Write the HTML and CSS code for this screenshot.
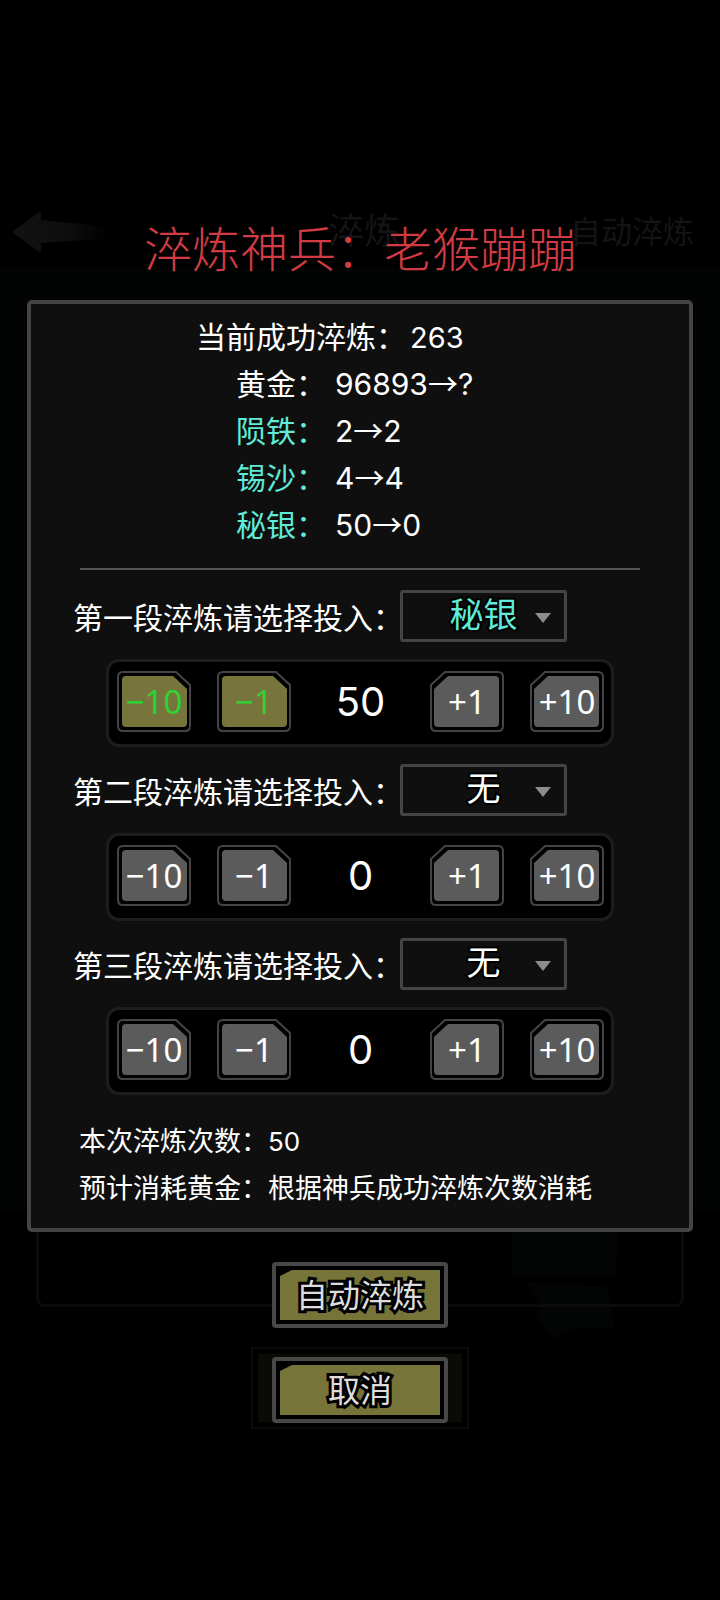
FILE: index.html
```html
<!DOCTYPE html>
<html lang="zh-CN">
<head>
<meta charset="utf-8">
<meta name="viewport" content="width=device-width, initial-scale=1">
<title>淬炼神兵</title>
<link rel="stylesheet" href="styles.css">
</head>
<body>
<svg class="defs" aria-hidden="true">
  <symbol id="key" viewBox="0 0 74 61">
    <path d="M6 1H59L73 14V55Q73 60 68 60H6Q1 60 1 55V6Q1 1 6 1Z" fill="#000" stroke="#444446" stroke-width="2"/>
    <path class="face" d="M9 5H56L70 18V52Q70 56 66 56H9Q5 56 5 52V9Q5 5 9 5Z"/>
  </symbol>
</svg>

<div class="backdrop" aria-hidden="true">
  <div class="topbar">
    <svg class="back" viewBox="0 0 100 42"><defs><linearGradient id="fade"><stop offset="0" stop-color="#121212"/><stop offset=".5" stop-color="#0e0e0e"/><stop offset="1" stop-color="#000"/></linearGradient></defs><path d="M0 21 29 0V9L100 16V27L29 32V42Z" fill="url(#fade)"/></svg>
    <span class="page-name">淬炼</span>
    <span class="page-action">自动淬炼</span>
  </div>
  <div class="scene">
    <svg class="shade" viewBox="0 0 110 170"><path d="M0 0H108L104 80H0ZM15 85 96 90 102 130 60 132 40 142 22 115 30 112Z" fill="#030505"/></svg>
  </div>
</div>

<main class="dialog">
  <h1 class="title">淬炼神兵：老猴蹦蹦</h1>

  <section class="panel">
    <p class="line total">当前成功淬炼：<span class="num">263</span></p>
    <div class="materials">
      <p class="line">黄金：<span class="num">96893<span class="arrow">→</span>?</span></p>
      <p class="line"><span class="rare">陨铁：</span><span class="num">2<span class="arrow">→</span>2</span></p>
      <p class="line"><span class="rare">锡沙：</span><span class="num">4<span class="arrow">→</span>4</span></p>
      <p class="line"><span class="rare">秘银：</span><span class="num">50<span class="arrow">→</span>0</span></p>
    </div>
    <hr class="divider">

    <div class="stages">
      <div class="pick">
        <label for="s1">第一段淬炼请选择投入：</label>
        <span class="drop"><select id="s1" class="rare"><option>秘银</option><option>无</option></select></span>
      </div>
      <div class="stepper">
        <button type="button" class="key on"><svg><use href="#key"/></svg><span>−10</span></button>
        <button type="button" class="key on"><svg><use href="#key"/></svg><span>−1</span></button>
        <output class="count">50</output>
        <button type="button" class="key plus"><svg><use href="#key"/></svg><span>+1</span></button>
        <button type="button" class="key plus"><svg><use href="#key"/></svg><span>+10</span></button>
      </div>
      <div class="pick">
        <label for="s2">第二段淬炼请选择投入：</label>
        <span class="drop"><select id="s2"><option>无</option><option>秘银</option></select></span>
      </div>
      <div class="stepper">
        <button type="button" class="key"><svg><use href="#key"/></svg><span>−10</span></button>
        <button type="button" class="key"><svg><use href="#key"/></svg><span>−1</span></button>
        <output class="count">0</output>
        <button type="button" class="key plus"><svg><use href="#key"/></svg><span>+1</span></button>
        <button type="button" class="key plus"><svg><use href="#key"/></svg><span>+10</span></button>
      </div>
      <div class="pick">
        <label for="s3">第三段淬炼请选择投入：</label>
        <span class="drop"><select id="s3"><option>无</option><option>秘银</option></select></span>
      </div>
      <div class="stepper">
        <button type="button" class="key"><svg><use href="#key"/></svg><span>−10</span></button>
        <button type="button" class="key"><svg><use href="#key"/></svg><span>−1</span></button>
        <output class="count">0</output>
        <button type="button" class="key plus"><svg><use href="#key"/></svg><span>+1</span></button>
        <button type="button" class="key plus"><svg><use href="#key"/></svg><span>+10</span></button>
      </div>
    </div>

    <div class="summary">
      <p>本次淬炼次数：<span class="num">50</span></p>
      <p>预计消耗黄金：根据神兵成功淬炼次数消耗</p>
    </div>
  </section>

  <div class="actions">
    <button type="button" class="action"><span>自动淬炼</span></button>
    <button type="button" class="action"><span>取消</span></button>
  </div>
</main>
</body>
</html>
```

FILE: styles.css
```css
* { box-sizing: border-box; }

body {
  margin: 0;
  min-height: 100vh;
  background: #000;
  color: #fff;
  font-family: "Noto Sans CJK SC", sans-serif;
  position: relative;
}

p, h1 { margin: 0; font-weight: 400; }
button, select { font-family: inherit; margin: 0; }
.defs { position: absolute; width: 0; height: 0; }

/* dimmed page behind the dialog */
.backdrop {
  position: absolute;
  inset: 0;
  z-index: -1;
  overflow: hidden;
  color: #141414;
}
.topbar {
  display: flex;
  align-items: center;
  justify-content: space-between;
  height: 268px;
  padding: 196px 26px 0 12px;
}
.back { width: 100px; height: 42px; }
.page-name { font-size: 36px; line-height: 40px; padding: 0 0 8px 46px; }
.page-action { font-size: 31px; line-height: 40px; padding-bottom: 4px; }
.scene {
  display: flex;
  align-items: flex-end;
  justify-content: flex-end;
  height: 1039px;
  margin-bottom: 40px;
  background: linear-gradient(#020404, #020404 942px, #000 942px);
  position: relative;
}
.scene::after {
  content: "";
  position: absolute;
  inset: 32px 36px 0;
  border: 3px solid #0b0b0b;
  border-radius: 8px;
}
.shade { width: 110px; height: 170px; margin: 0 98px -60px; }
.backdrop::after {
  content: "";
  display: block;
  width: 214px;
  height: 78px;
  margin: 0 auto;
  background: #0b0b05;
  border: 2px solid #0b0b0b;
  box-shadow: inset 0 0 0 5px #000;
}

.dialog { padding: 210px 27px 0; }
.title {
  font-size: 48px;
  line-height: 72px;
  color: #d23b43;
  text-align: center;
  font-weight: 300;
}

.panel {
  margin-top: 18px;
  border: 4px solid #444;
  border-radius: 5px;
  background: #0f0f0f;
  padding: 8px 0 18px;
}
.line { height: 47px; font-size: 30px; line-height: 47px; }
.total { padding-left: 165px; }
.materials { padding-left: 205px; }
.num { font-family: Inter, "Noto Sans CJK SC", sans-serif; font-size: 30px; line-height: 1; }
.line .num { margin-left: 9px; }
.total .num { margin-left: 4px; font-size: 29px; }
.arrow { font-family: "Noto Sans CJK SC", sans-serif; }
.rare { color: #5fead9; }
.divider {
  margin: 21px 49px 20px;
  border: 0;
  height: 2px;
  background: #525252;
}

.stages { display: grid; gap: 17px; }
.pick {
  display: flex;
  align-items: center;
  height: 52px;
  padding-left: 42px;
  font-size: 30px;
  line-height: 52px;
}
.drop { position: relative; margin-left: -3px; width: 167px; height: 52px; }
.drop::after {
  content: "";
  position: absolute;
  right: 16px;
  top: 23px;
  border: 8px solid transparent;
  border-top: 10px solid #8c8c8c;
  border-bottom: 0;
  pointer-events: none;
}
.drop select {
  appearance: none;
  display: block;
  width: 100%;
  height: 100%;
  padding: 0 0 6px;
  border: 3px solid #444;
  border-radius: 3px;
  background: #0f0f0f;
  color: #fff;
  font-size: 34px;
  line-height: 40px;
  text-align-last: center;
  -webkit-text-stroke: 4px #000;
  paint-order: stroke fill;
}
.drop select.rare { color: #5fead9; }

.stepper {
  display: flex;
  align-items: center;
  gap: 26px;
  margin: 0 75px;
  padding: 9px 7px 12px 8px;
  border: 3px solid #1d1d1d;
  border-radius: 13px;
  background: #000;
}
.key {
  display: grid;
  place-items: center;
  width: 74px;
  height: 61px;
  padding: 0;
  border: 0;
  background: none;
  color: #fff;
  font-family: "Noto Sans", sans-serif;
  font-size: 33px;
  line-height: 61px;
}
.key > * { grid-area: 1 / 1; }
.key span { z-index: 1; }
.key svg { width: 74px; height: 61px; fill: #5b5b5b; }
.key.on svg { fill: #78753c; }
.key.on { color: #2fd233; }
.key.plus svg { transform: scaleX(-1); }
.count {
  flex: 1;
  text-align: center;
  font-family: Inter, sans-serif;
  font-size: 40px;
  line-height: 60px;
}

.summary { padding: 21px 48px 0; font-size: 27px; line-height: 47px; }
.summary p { height: 47px; }
.summary .num { font-size: 26px; }

.actions { display: grid; justify-items: center; gap: 29px; margin-top: 30px; }
.action {
  width: 176px;
  height: 66px;
  padding: 4px;
  border: 4px solid #484848;
  border-radius: 4px;
  background: #000;
  color: #ddd;
  font-size: 32px;
}
.action span {
  display: block;
  padding-bottom: 4px;
  line-height: 46px;
  background: #77743a;
  clip-path: polygon(0 6px, 12px 0, 100% 0, 100% 100%, 0 100%);
  -webkit-text-stroke: 6px #000;
  paint-order: stroke fill;
}
```
